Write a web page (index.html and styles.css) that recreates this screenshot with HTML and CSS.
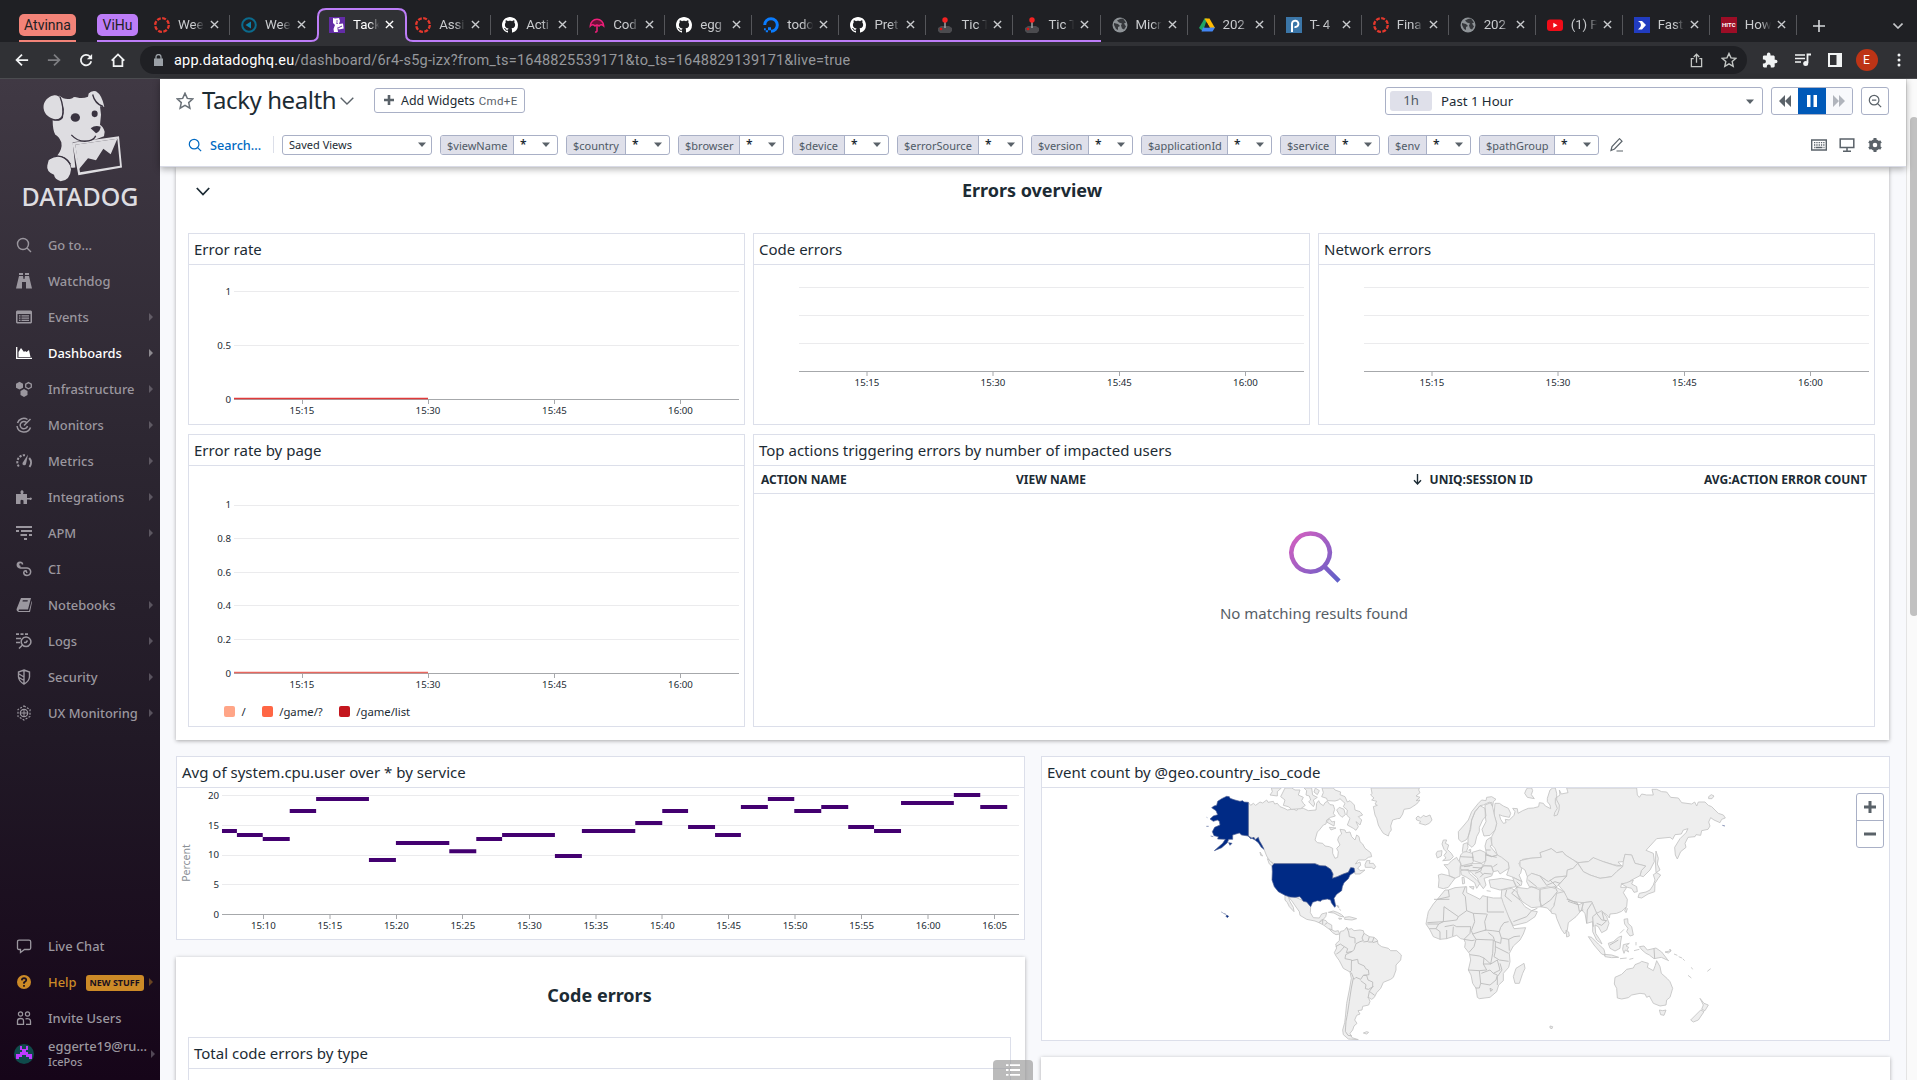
FILE: index.html
```html
<!DOCTYPE html>
<html lang="en">
<head>
<meta charset="utf-8">
<title>Tacky health | Datadog</title>
<link rel="stylesheet" href="styles.css">
</head>
<body>
<svg class="defs" width="0" height="0" aria-hidden="true">
  <defs>
    <symbol id="canvas" viewBox="0 0 16 16"><circle cx="8" cy="8" r="6.8" fill="none" stroke="#e4382d" stroke-width="2.3" stroke-dasharray="3.9 1.44"/></symbol>
    <symbol id="github" viewBox="0 0 16 16"><path fill="#fff" d="M8 0C3.58 0 0 3.58 0 8c0 3.54 2.29 6.53 5.47 7.59.4.07.55-.17.55-.38 0-.19-.01-.82-.01-1.49-2.01.37-2.53-.49-2.69-.94-.09-.23-.48-.94-.82-1.13-.28-.15-.68-.52-.01-.53.63-.01 1.08.58 1.23.82.72 1.21 1.87.87 2.33.66.07-.52.28-.87.51-1.07-1.78-.2-3.64-.89-3.64-3.95 0-.87.31-1.59.82-2.15-.08-.2-.36-1.02.08-2.12 0 0 .67-.21 2.2.82.64-.18 1.32-.27 2-.27s1.36.09 2 .27c1.53-1.04 2.2-.82 2.2-.82.44 1.1.16 1.92.08 2.12.51.56.82 1.27.82 2.15 0 3.07-1.87 3.75-3.65 3.95.29.25.54.73.54 1.48 0 1.07-.01 1.93-.01 2.2 0 .21.15.46.55.38A8 8 0 0 0 16 8c0-4.42-3.58-8-8-8z"/></symbol>
    <symbol id="globe" viewBox="0 0 16 16"><circle cx="8" cy="8" r="7.5" fill="#8e9397"/><path fill="#1f2024" d="M2 6l4 1 2 2-2 1 0 3-2-1-2-4zM8 2l3-.5 3 4-2 1 2 3-2 3-2-1-1-3 1-2-3-1-2-2z" opacity=".8"/></symbol>
    <symbol id="joystick" viewBox="0 0 16 16"><path fill="#4b4b4f" d="M1 11l3-2h8l3 2v3l-2 2H3l-2-2z"/><path fill="#aaa" d="M7.3 5h1.4v6H7.3z"/><circle cx="8" cy="3" r="2.7" fill="#f42222"/><circle cx="4" cy="12" r="1.3" fill="#d11"/></symbol>
    <symbol id="close" viewBox="0 0 10 10"><path d="M1 1l8 8M9 1L1 9" stroke="currentColor" stroke-width="1.5" fill="none"/></symbol>
    <symbol id="down" viewBox="0 0 10 6"><path d="M0 .5h10L5 6z" fill="currentColor"/></symbol>
    <symbol id="mag" viewBox="0 0 16 16"><path d="M7 1.5a5.5 5.5 0 1 0 0 11 5.5 5.5 0 0 0 0-11zM11 11l4 4" stroke="currentColor" fill="none" stroke-width="1.4"/></symbol>
  </defs>
</svg>

<header class="browser">
  <div class="tabs">
    <span class="chip chip-red">Atvinna</span>
    <span class="chip chip-purple">ViHu</span>
    <div class="tablist">
      <div class="tab g"><svg class="fav"><use href="#canvas"/></svg><span>Wee</span><svg class="x"><use href="#close"/></svg></div>
      <div class="tab g"><svg class="fav" viewBox="0 0 16 16"><circle cx="8" cy="8" r="6.8" fill="none" stroke="#0b6a8c" stroke-width="2"/><path d="M10 4.5v7L4.5 8z" fill="#0b82ab"/></svg><span>Wee</span><svg class="x"><use href="#close"/></svg></div>
      <div class="tab active"><svg class="outline" viewBox="0 0 104 34"><path d="M0 34V33H1Q8 33 8 26V9Q8 1 16 1H88Q96 1 96 9V26Q96 33 103 33H104V34z" fill="#303135"/><path d="M0 33H1Q8 33 8 26V9Q8 1 16 1H88Q96 1 96 9V26Q96 33 103 33H104" fill="none" stroke="#bd7df8" stroke-width="2"/></svg><svg class="fav" viewBox="0 0 16 16"><path d="M0 0h16v16H0z" fill="#632ca6"/><path d="M4 1l2 .6L10 1l1 3-1 3 4-.6.7 5-5 1.200-1.500-3L9 15H5l-.5-3L6 8 4 6z" fill="#fff"/><circle cx="8" cy="4" r=".7" fill="#632ca6"/><path d="M7 6l2 .3M9 11l4-2" stroke="#632ca6"/></svg><span>Tack</span><svg class="x"><use href="#close"/></svg></div>
      <div class="tab g"><svg class="fav"><use href="#canvas"/></svg><span>Assi</span><svg class="x"><use href="#close"/></svg></div>
      <div class="tab g"><svg class="fav"><use href="#github"/></svg><span>Acti</span><svg class="x"><use href="#close"/></svg></div>
      <div class="tab g"><svg class="fav" viewBox="0 0 16 16"><path d="M1.300 9A6.700 6.700 0 0 1 14.700 9Q12 6.500 10 9 8 7 6 9 3.500 6.500 1.300 9z" fill="#6b1038" stroke="#f01f7a" stroke-width="1.500"/><path d="M8 8v6q-.2 1.300-2 1" fill="none" stroke="#f01f7a" stroke-width="1.500"/></svg><span>Cod</span><svg class="x"><use href="#close"/></svg></div>
      <div class="tab g"><svg class="fav"><use href="#github"/></svg><span>egg</span><svg class="x"><use href="#close"/></svg></div>
      <div class="tab g"><svg class="fav" viewBox="0 0 16 16"><path d="M8 14.300A6.300 6.300 0 1 0 1.700 8" fill="none" stroke="#0a7cff" stroke-width="3"/><path d="M5 10.300h3v3H5zM2.800 13.200H5v2H2.800zM1 11.300h1.800v1.900H1z" fill="#0a7cff"/></svg><span>todo</span><svg class="x"><use href="#close"/></svg></div>
      <div class="tab g"><svg class="fav"><use href="#github"/></svg><span>Pret</span><svg class="x"><use href="#close"/></svg></div>
      <div class="tab g"><svg class="fav"><use href="#joystick"/></svg><span>Tic T</span><svg class="x"><use href="#close"/></svg></div>
      <div class="tab g"><svg class="fav"><use href="#joystick"/></svg><span>Tic T</span><svg class="x"><use href="#close"/></svg></div>
      <div class="tab"><svg class="fav"><use href="#globe"/></svg><span>Micr</span><svg class="x"><use href="#close"/></svg></div>
      <div class="tab"><svg class="fav" viewBox="0 0 16 16"><path fill="#1fa463" d="M5.500 1.500h2.600L4 14.500 0 11z"/><path fill="#ffba00" d="M5.500 1.500h5L16 11h-5z"/><path fill="#4285f4" d="M4 10.500h12l-2.500 4h-11z"/><path d="M8 6l2.600 4.500H5.400z" fill="#1f2024"/></svg><span>202</span><svg class="x"><use href="#close"/></svg></div>
      <div class="tab"><svg class="fav" viewBox="0 0 16 16"><path d="M0 0h16v16H0z" fill="#3b76a8"/><path d="M6 15V6.500a3.200 3.200 0 1 1 2.500 3.500" fill="none" stroke="#fff" stroke-width="2"/></svg><span>T- 4</span><svg class="x"><use href="#close"/></svg></div>
      <div class="tab"><svg class="fav"><use href="#canvas"/></svg><span>Fina</span><svg class="x"><use href="#close"/></svg></div>
      <div class="tab"><svg class="fav"><use href="#globe"/></svg><span>202</span><svg class="x"><use href="#close"/></svg></div>
      <div class="tab"><svg class="fav" viewBox="0 0 16 16"><rect y="2.500" width="16" height="11.500" rx="3" fill="#f00c18"/><path d="M6.300 5.800v5l4.200-2.500z" fill="#fff"/></svg><span>(1) P</span><svg class="x"><use href="#close"/></svg></div>
      <div class="tab"><svg class="fav" viewBox="0 0 16 16"><path d="M0 0h16v16H0z" fill="#213cc0"/><path d="M4 4h4l4 4-4 4.500H4q3-2 3-4.500T4 4z" fill="#fff"/></svg><span>Fast</span><svg class="x"><use href="#close"/></svg></div>
      <div class="tab"><span class="hitc">HITC</span><span>How</span><svg class="x"><use href="#close"/></svg></div>
    </div>
    <svg class="plus" viewBox="0 0 12 12"><path d="M6 0v12M0 6h12" stroke="#d5d7da" stroke-width="1.600"/></svg>
    <svg class="tabdown" viewBox="0 0 10 6"><path d="M.5.5L5 5 9.500.5" fill="none" stroke="#c5c7ca" stroke-width="1.600"/></svg>
  </div>
  <div class="toolbar">
    <svg class="nav" viewBox="0 0 16 16"><path d="M15 8H2M8 1.800L1.800 8 8 14.200" fill="none" stroke="#f1f3f4" stroke-width="2"/></svg>
    <svg class="nav" viewBox="0 0 16 16"><path d="M1 8h13M8 1.800L14.200 8 8 14.200" fill="none" stroke="#7d7e82" stroke-width="2"/></svg>
    <svg class="nav" viewBox="0 0 16 16"><path d="M14 9.500A6 6 0 1 1 12.500 4L14 5.500" fill="none" stroke="#f1f3f4" stroke-width="2"/><path d="M15 1v6H9z" fill="#f1f3f4"/></svg>
    <svg class="nav" viewBox="0 0 16 16"><path d="M.8 8.800L8 1.600l7.200 7.200M3 7.500v7.500h10V7.500" fill="none" stroke="#f1f3f4" stroke-width="2"/></svg>
    <div class="omnibox">
      <svg class="lock" viewBox="0 0 9 12"><path d="M0 4.500h9V12H0z" fill="#9aa0a6"/><path d="M2 5V3a2.500 2.500 0 0 1 5 0v2" fill="none" stroke="#9aa0a6" stroke-width="1.300"/></svg>
      <span class="url"><b>app.datadoghq.eu</b>/dashboard/6r4-s5g-izx?from_ts=1648825539171&amp;to_ts=1648829139171&amp;live=true</span>
      <svg class="share" viewBox="0 0 14 16"><path d="M4 6H1.500v8.500h11V6H10M7 10.500V1.500M4 4.300l3-3 3 3" fill="none" stroke="#c4c7c5" stroke-width="1.400"/></svg>
      <svg class="bm" viewBox="0 0 16 16"><path d="M8 1.500l2 4.400 4.700.5-3.500 3.200 1 4.700L8 11.900l-4.200 2.400 1-4.700L1.300 6.400 6 5.900z" fill="none" stroke="#c4c7c5" stroke-width="1.400"/></svg>
    </div>
    <svg class="tb" viewBox="0 0 16 16"><path fill="#f1f3f4" d="M13.700 7.700h-1V4.800c0-.8-.6-1.400-1.400-1.400H8.500v-1a1.800 1.800 0 0 0-3.600 0v1H2.200C1.400 3.400.9 4 .9 4.800v2.600h1a2 2 0 0 1 0 4h-1V14c0 .8.5 1.400 1.300 1.400h2.600v-1a2 2 0 0 1 4 0v1h2.500c.8 0 1.400-.6 1.400-1.400v-2.700h1a1.800 1.800 0 0 0 0-3.600z"/></svg>
    <svg class="tb" viewBox="0 0 16 16"><path d="M0 3h10M0 6.500h10M0 10h6" stroke="#f1f3f4" stroke-width="1.700"/><path d="M16 2.500h-3.500V11" stroke="#f1f3f4" stroke-width="1.800" fill="none"/><circle cx="10.700" cy="11.500" r="2.500" fill="#f1f3f4"/></svg>
    <svg class="tb" viewBox="0 0 16 16"><path d="M2 2h12v12H2z" fill="none" stroke="#f1f3f4" stroke-width="2"/><path d="M9.500 2H15v12H9.500z" fill="#f1f3f4"/></svg>
    <span class="user">E</span>
    <svg class="tb dots" viewBox="0 0 16 16"><g fill="#f1f3f4"><circle cx="8" cy="3" r="1.500"/><circle cx="8" cy="8" r="1.500"/><circle cx="8" cy="13" r="1.500"/></g></svg>
  </div>
</header>

<div class="app">
  <nav class="side">
    <div class="logo">
      <svg viewBox="129 30 237 275" width="79" height="92"><g fill="#dedde1">
        <path d="M131 86C128 66 142 50 160 46 178 42 188 60 188 72L190 95C186 112 178 118 166 118 148 114 134 104 131 86z"/>
        <path d="M178 46Q195 62 217 54 222 48 232 52 248 56 264 50L266 40Q274 30 288 33 306 44 313 80L300 78 303 104 300 134Q310 140 314 155L312 168 286 178 218 186 226 262Q210 264 213 258 210 236 186 229L172 226Q188 206 184 186 176 168 166 164 158 150 158 120L178 120Q192 112 192 88z"/>
        <path d="M146 240Q160 226 184 228 210 242 213 268 210 302 182 303 164 298 162 284 138 274 142 256z"/>
        <path fill-rule="evenodd" d="M217 188L357 168 366 262 235 285zM226 194L240 276 360 257 352 176z"/>
        <path d="M226 194L352 176 332 222 310 206 288 240 264 234 236 268z"/></g>
        <g fill="#393340"><ellipse cx="226" cy="112" rx="14" ry="13"/><ellipse cx="284" cy="101" rx="9" ry="10"/><path d="M272 144Q286 134 302 140 300 156 288 159z"/></g>
        <path d="M278 43Q284 70 309 79M180 50Q193 82 187 112 180 122 160 119M214 164Q236 188 266 182 282 180 287 167M147 236Q186 214 211 252" fill="none" stroke="#393340" stroke-width="4"/></svg>
      <strong>DATADOG</strong>
    </div>
    <ul class="menu">
      <li><svg viewBox="0 0 16 16"><use href="#mag"/></svg>Go to...</li>
      <li><svg viewBox="0 0 16 16"><path fill="currentColor" d="M3 0h4v2H3zM9 0h4v2H9zM3 3h4l.5 3h1L9 3h4l3 12.500h-6V9H6v6.500H0z"/></svg>Watchdog</li>
      <li class="more"><svg viewBox="0 0 16 16"><path fill="currentColor" fill-rule="evenodd" d="M1 1.500h14l1 1v11l-1 1H1l-1-1v-11zM1.500 5v8h13V5zM3 6.300h1.500v1.200H3zm2.500 0H13v1.200H5.500zM3 8.500h1.500v1.200H3zm2.500 0H13v1.200H5.500zM3 10.700h1.500v1.200H3zm2.500 0H13v1.200H5.500z"/></svg>Events</li>
      <li class="more on"><svg viewBox="0 0 16 16"><path d="M.7 2v11.400H16" fill="none" stroke="currentColor" stroke-width="1.300"/><path fill="currentColor" d="M2.500 12V7L5 3l3 4 1-1 1.500 1L13 5l1.500 7z"/></svg>Dashboards</li>
      <li class="more"><svg viewBox="0 0 16 16"><path fill="currentColor" d="M3.500.8L7 2.700v4L3.500 8.600 0 6.700v-4zM8 8l3.500 2v4L8 16l-3.500-2v-4z"/><path fill="none" stroke="currentColor" stroke-width="1.300" d="M12.500 1.600l2.800 1.600v3L12.500 7.800 9.700 6.200v-3z"/></svg>Infrastructure</li>
      <li class="more"><svg viewBox="0 0 16 16"><path d="M11.500 2.500A6.500 6.500 0 0 0 1.500 6M1 9a7 7 0 0 0 13.500 1.500M10.500 5.500A3.700 3.700 0 1 0 11.500 9M8 8.500L14.500 2" fill="none" stroke="currentColor" stroke-width="1.500"/></svg>Monitors</li>
      <li class="more"><svg viewBox="0 0 16 16"><path d="M9 2.200A7 7 0 0 0 2.800 13.500" fill="none" stroke="currentColor" stroke-width="2" stroke-dasharray="2.200 1.300"/><path d="M13.200 5A7 7 0 0 1 13.500 14" fill="none" stroke="currentColor" stroke-width="2"/><path fill="currentColor" d="M12 1.500L10 11a1.800 1.800 0 0 1-3.500-1z"/></svg>Metrics</li>
      <li class="more"><svg viewBox="0 0 16 16"><path fill="currentColor" d="M0 5h5q-1.500-3 1-4 2.500 1 1 4h4v4h2.500q1.500-1 2.500.5-1 2.500-2.500 1H11V15H7.500v-3.500q-2-1.500-3 0V15H0z"/></svg>Integrations</li>
      <li class="more"><svg viewBox="0 0 16 16"><path fill="currentColor" d="M0 1h16v2H0zM0 5h3v2H0zM5 5h11v2H5zM4.500 9H11v2H4.500zM13 9h3v2h-3zM8 13h3v2H8z"/></svg>APM</li>
      <li><svg viewBox="0 0 16 16"><path d="M4.500 5.500A2 2 0 1 1 6.500 3.500Q6.500 1.300 4 1.300 1.300 1.500 1.300 4 1.500 6.500 4.500 7H11q3.500.5 3.700 3.800Q14.500 14.300 11 14.500 7.700 14.300 7.700 11.500 8 9.500 10 9.700L11 12" fill="none" stroke="currentColor" stroke-width="1.500"/></svg>CI</li>
      <li class="more"><svg viewBox="0 0 16 16"><path fill="currentColor" d="M5 1h10l-3 11.500H3Q2 14 3.500 14H13l2.500-9.500.7-.5L14 15H2.500Q-.2 14 .8 11.500zM6.500 4.500h5l.3-1.200h-5z"/></svg>Notebooks</li>
      <li class="more"><svg viewBox="0 0 16 16"><path d="M0 1.200h3M4.500 1.200h3M9 1.200h3M0 5.500h5M0 9.500h4" stroke="currentColor" stroke-width="1.700"/><path d="M10 4a4.800 4.800 0 1 0 .1 0zM6.500 12L3 15.500M8 9.500h2l1.500-2" fill="none" stroke="currentColor" stroke-width="1.500"/></svg>Logs</li>
      <li class="more"><svg viewBox="0 0 16 16"><path d="M8 1l5.500 2v5Q13 12.500 8 15 3 12.500 2.500 8V3zM8 1v14M3 5l5 3M3 8.500l5 3" fill="none" stroke="currentColor" stroke-width="1.400"/></svg>Security</li>
      <li class="more"><svg viewBox="0 0 16 16"><path d="M8 1l6 3.500v7L8 15l-6-3.500v-7z" fill="none" stroke="currentColor" stroke-width="1.200" stroke-dasharray="2 1.400"/><circle cx="8" cy="8" r="3.700" fill="none" stroke="currentColor" stroke-width="1.200"/><path d="M4 8h8M8 4v8" stroke="currentColor"/></svg>UX Monitoring</li>
    </ul>
    <ul class="menu low">
      <li><svg viewBox="0 0 16 16"><path d="M3 2.200h10q1.700 0 1.700 1.500V10q0 1.500-1.500 1.500H8.500L4.500 14.500v-3H3Q1.500 11.500 1.500 10V3.700Q1.500 2.200 3 2.200z" fill="none" stroke="currentColor" stroke-width="1.300"/></svg>Live Chat</li>
      <li class="more help"><svg viewBox="0 0 16 16"><circle cx="8" cy="8" r="7" fill="currentColor"/><path d="M5.800 6.300Q6 4.200 8 4.200q2.300.1 2.300 2Q10.200 7.300 8 8.500v1.200M8 11v1.700" fill="none" stroke="#191020" stroke-width="1.700"/></svg>Help<em>NEW STUFF</em></li>
      <li><svg viewBox="0 0 16 16"><circle cx="4.500" cy="4" r="2.100" fill="none" stroke="currentColor" stroke-width="1.200"/><circle cx="11.500" cy="4" r="2.100" fill="none" stroke="currentColor" stroke-width="1.200"/><path d="M1.500 14.300V11Q1.500 8.500 4.500 8.500T7.500 11v3.300zM9.500 8.800q5-.8 5 2.500v3H10" fill="none" stroke="currentColor" stroke-width="1.300"/></svg>Invite Users</li>
    </ul>
    <div class="account">
      <svg viewBox="0 0 20 20" width="20" height="20"><circle cx="10" cy="10" r="10" fill="#0f4b4b"/><path d="M6 2h2v3h4V2h2v4h-2v2h2v2h4v5h-3v-2h-3v-2H8v2H5v2H2v-5h4V8h2V6H6z" fill="#bd3cff"/></svg>
      <p>eggerte19@ru...<small>IcePos</small></p>
    </div>
  </nav>

  <main class="main">
    <header class="head">
      <div class="row1">
        <svg class="fave" viewBox="0 0 18 18"><path d="M9 1.200l2.300 5.200 5.500.5-4.100 3.700 1.200 5.600L9 13.300l-4.900 2.900 1.200-5.600L1.200 6.900l5.500-.5z" fill="none" stroke="#6a7178" stroke-width="1.500"/></svg>
        <h1>Tacky health</h1>
        <svg class="chev" viewBox="0 0 14 8"><path d="M.7.800L7 7 13.300.800" fill="none" stroke="#5a6269" stroke-width="1.400"/></svg>
        <button class="add"><svg viewBox="0 0 10 10"><path d="M5 0v10M0 5h10" stroke="#5a6269" stroke-width="2.600"/></svg>Add Widgets<kbd>Cmd+E</kbd></button>
        <div class="time"><b>1h</b><span>Past 1 Hour</span><svg class="dd"><use href="#down"/></svg></div>
        <div class="play">
          <span><svg viewBox="0 0 12 12"><path d="M6 0v12L0 6zM12 0v12L6 6z" fill="#5a6269"/></svg></span>
          <span class="pause"><svg viewBox="0 0 12 12"><path d="M1 0h3.500v12H1zM7.500 0H11v12H7.500z" fill="#fff"/></svg></span>
          <span class="off"><svg viewBox="0 0 12 12"><path d="M0 0l6 6-6 6zM6 0l6 6-6 6z" fill="#b0b4bc"/></svg></span>
        </div>
        <div class="zoomout"><svg viewBox="0 0 16 16"><use href="#mag"/><path d="M4.500 7h5" stroke="#5a6269" stroke-width="1.400"/></svg></div>
      </div>
      <div class="row2">
        <div class="search"><svg viewBox="0 0 16 16"><use href="#mag"/></svg>Search...</div>
        <div class="saved">Saved Views<svg class="dd"><use href="#down"/></svg></div>
        <div class="var v1"><b>$viewName</b><i>*</i><svg class="dd"><use href="#down"/></svg></div>
        <div class="var v2"><b>$country</b><i>*</i><svg class="dd"><use href="#down"/></svg></div>
        <div class="var v3"><b>$browser</b><i>*</i><svg class="dd"><use href="#down"/></svg></div>
        <div class="var v4"><b>$device</b><i>*</i><svg class="dd"><use href="#down"/></svg></div>
        <div class="var v5"><b>$errorSource</b><i>*</i><svg class="dd"><use href="#down"/></svg></div>
        <div class="var v6"><b>$version</b><i>*</i><svg class="dd"><use href="#down"/></svg></div>
        <div class="var v7"><b>$applicationId</b><i>*</i><svg class="dd"><use href="#down"/></svg></div>
        <div class="var v8"><b>$service</b><i>*</i><svg class="dd"><use href="#down"/></svg></div>
        <div class="var v9"><b>$env</b><i>*</i><svg class="dd"><use href="#down"/></svg></div>
        <div class="var v10"><b>$pathGroup</b><i>*</i><svg class="dd"><use href="#down"/></svg></div>
        <svg class="pencil" viewBox="0 0 14 14"><path d="M1 12.500l1-4 7.500-7.800 2.500 2.500-7.500 7.800zM6.500 13h6.500" fill="none" stroke="#5a6269" stroke-width="1.200"/></svg>
        <div class="tools">
          <svg viewBox="0 0 16 16"><path d="M.7 3h14.600v10H.7z" fill="none" stroke="#5a6269" stroke-width="1.400"/><path d="M3 5.700h10.500M3 8h10.500" stroke="#5a6269" stroke-width="1.300" stroke-dasharray="1.300 1"/><path d="M4.500 10.500h7M3 10.500h.8M12.500 10.500h1" stroke="#5a6269" stroke-width="1.300"/></svg>
          <svg viewBox="0 0 16 16"><path d="M1.200 2h13.600v8.500H1.200zM8 10.500V14M4 14.200h8" fill="none" stroke="#5a6269" stroke-width="1.500"/></svg>
          <svg viewBox="0 0 16 16"><circle cx="8" cy="8" r="4" fill="none" stroke="#5a6269" stroke-width="3.400"/><path d="M8 1v2.500M8 12.500V15M2 4.500l2.200 1.300M11.800 10.200L14 11.500M2 11.500l2.200-1.300M11.800 5.800L14 4.500" stroke="#5a6269" stroke-width="3"/></svg>
        </div>
      </div>
    </header>

    <div class="board">
      <section class="group overview">
        <div class="ghead"><svg viewBox="0 0 14 9"><path d="M.8 1L7 7.500 13.200 1" fill="none" stroke="#1c2b34" stroke-width="1.800"/></svg><h2>Errors overview</h2></div>
        <div class="grid">
          <article class="widget"><h3>Error rate</h3>
            <svg class="chart" viewBox="189 265 555 159"><path class="gl" d="M234 291.500H739M234 345.500H739"/><path class="ax" d="M234 399.500H739M302.500 399v5M428.500 399v5M554.500 399v5M680.500 399v5"/><path d="M234 398.500H428" stroke="#e03a3a" stroke-width="1.400"/>
              <g class="yl"><text x="231" y="295">1</text><text x="231" y="349">0.5</text><text x="231" y="403">0</text></g><g class="xl"><text x="302" y="414">15:15</text><text x="428" y="414">15:30</text><text x="554.500" y="414">15:45</text><text x="680.500" y="414">16:00</text></g></svg></article>
          <article class="widget"><h3>Code errors</h3>
            <svg class="chart" viewBox="754 265 555 159"><path class="gl" d="M799 287.500H1304M799 315.500H1304M799 343.500H1304"/><path class="ax" d="M799 371.500H1304M867 371v5M993 371v5M1119.500 371v5M1245.500 371v5"/><g class="xl"><text x="867" y="386">15:15</text><text x="993" y="386">15:30</text><text x="1119.500" y="386">15:45</text><text x="1245.500" y="386">16:00</text></g></svg></article>
          <article class="widget"><h3>Network errors</h3>
            <svg class="chart" viewBox="754 265 555 159"><path class="gl" d="M799 287.500H1304M799 315.500H1304M799 343.500H1304"/><path class="ax" d="M799 371.500H1304M867 371v5M993 371v5M1119.500 371v5M1245.500 371v5"/><g class="xl"><text x="867" y="386">15:15</text><text x="993" y="386">15:30</text><text x="1119.500" y="386">15:45</text><text x="1245.500" y="386">16:00</text></g></svg></article>
          <article class="widget"><h3>Error rate by page</h3>
            <svg class="chart" viewBox="189 466 555 229"><path class="gl" d="M234 505.500H739M234 538.500H739M234 572.500H739M234 605.500H739M234 639.500H739"/><path class="ax" d="M234 673.500H739M302.500 673v5M428.500 673v5M554.500 673v5M680.500 673v5"/><path d="M234 672.500H428" stroke="#e8675f" stroke-width="1.400"/>
              <g class="yl"><text x="231" y="508">1</text><text x="231" y="542">0.8</text><text x="231" y="576">0.6</text><text x="231" y="609">0.4</text><text x="231" y="643">0.2</text><text x="231" y="677">0</text></g><g class="xl"><text x="302" y="688">15:15</text><text x="428" y="688">15:30</text><text x="554.500" y="688">15:45</text><text x="680.500" y="688">16:00</text></g></svg>
            <p class="legend"><span class="l1">/</span><span class="l2">/game/?</span><span class="l3">/game/list</span></p></article>
          <article class="widget wide"><h3>Top actions triggering errors by number of impacted users</h3>
            <div class="thead"><span>ACTION NAME</span><span>VIEW NAME</span><span class="num"><svg viewBox="0 0 9 11"><path d="M4.500 0v10M1 6.300L4.500 10 8 6.300" fill="none" stroke="#1c2b34" stroke-width="1.400"/></svg>UNIQ:SESSION ID</span><span class="num">AVG:ACTION ERROR COUNT</span></div>
            <div class="empty"><svg viewBox="0 0 54 54"><defs><linearGradient id="mg" x1="0" y1="0" x2="1" y2="1"><stop offset="0" stop-color="#d65fc0"/><stop offset="1" stop-color="#5f5fc8"/></linearGradient></defs><path d="M23 3.500a19.500 19.500 0 1 0 .01 0zM37 37L52 52" fill="none" stroke="url(#mg)" stroke-width="4.600"/></svg><p>No matching results found</p></div></article>
        </div>
      </section>

      <div class="cols">
        <div class="col">
          <article class="widget cpu"><h3>Avg of system.cpu.user over * by service</h3>
            <svg class="chart" viewBox="177 788 847 150"><path class="gl" d="M222 795.500H1019M222 825.500H1019M222 855.500H1019M222 884.500H1019"/>
              <path class="ax" d="M222 914.500H1019M263.500 914v5M330 914v5M396.500 914v5M462.500 914v5M529.500 914v5M596 914v5M662 914v5M728.500 914v5M795 914v5M861.500 914v5M928 914v5M994.500 914v5"/>
              <g transform="translate(160 740) scale(.574 .33333)"><path stroke="#430070" stroke-width="12" d="M108 273H134M134 285H179M179 297H226M226 213H272M272 177H364M364 360H411M411 309H504M504 334H551M551 297H596M596 285H688M688 348H735M735 273H828M828 249H875M875 213H920M920 261H967M967 285H1012M1012 201H1059M1059 177H1105M1105 213H1152M1152 201H1199M1199 261H1244M1244 273H1291M1291 189H1383M1383 165H1429M1429 201H1476"/></g>
              <g class="yl"><text x="219" y="799">20</text><text x="219" y="829">15</text><text x="219" y="858">10</text><text x="219" y="888">5</text><text x="219" y="918">0</text></g>
              <g class="xl"><text x="263.300" y="929">15:10</text><text x="329.800" y="929">15:15</text><text x="396.300" y="929">15:20</text><text x="462.800" y="929">15:25</text><text x="529.300" y="929">15:30</text><text x="595.800" y="929">15:35</text><text x="662.300" y="929">15:40</text><text x="728.700" y="929">15:45</text><text x="795.200" y="929">15:50</text><text x="861.700" y="929">15:55</text><text x="928.200" y="929">16:00</text><text x="994.700" y="929">16:05</text><text class="pct" transform="translate(190 863) rotate(-90)">Percent</text></g></svg></article>
          <section class="group code"><h2>Code errors</h2><article class="widget"><h3>Total code errors by type</h3></article></section>
        </div>
        <div class="col">
          <article class="widget geo"><h3>Event count by @geo.country_iso_code</h3>
            <div class="mapbox">
            <svg class="map" viewBox="6 144 2541 756">
              <g class="land">
                <path d="M625 187L632 196 640 190 647 196 660 186 668 189 680 180 684 187 700 184 704 192 712 190 720 200 735 206 742 210 760 207 770 212 775 204 790 205 805 212 828 210 830 190 836 182 840 190 850 197 855 188 862 184 870 194 880 195 884 208 880 220 886 228 872 232 860 240 858 252 850 255 838 270 832 276 825 300 832 308 848 310 855 318 868 320 878 325 878 340 885 355 893 352 895 335 890 325 900 315 893 300 896 290 905 282 900 268 915 270 918 278 930 276 935 290 945 300 950 285 957 290 960 305 968 312 975 325 992 338 995 350 985 352 975 360 955 360 946 372 960 366 962 376 953 384 960 392 975 390 960 402 945 402 943 386 932 383 925 397 910 402 892 410 877 415 879 402 872 388 857 378 840 377 825 371 702 371 690 364 680 348 672 328 665 314 655 300 640 294 625 288z"/>
                <path d="M694 144L697 155 690 165 712 168 712 155 724 144zM735 144L722 170 735 180 730 196 745 200 755 208 782 206 796 196 790 190 785 182 790 172 775 165 780 150 765 150 755 144zM792 144L800 152 798 165 808 168 812 180 806 185 820 200 824 192 820 180 832 172 818 165 815 144zM826 144l12 8-6 12-10-8zM846 144L850 158 845 170 860 175 862 182 885 183 895 180 900 176 915 190 910 200 922 210 920 225 930 235 922 255 940 265 948 271 955 260 948 245 960 255 965 240 955 230 968 225 960 215 945 210 943 195 930 182 922 186 915 170 900 164 902 156 885 150 880 144zM860 246l8-10 8 10 8-2-2 14zM868 262l20 2-15 6zM890 210l8-8 14 6 4 16-10 8-8-8z"/>
                <path d="M976 382L975 374 980 362 990 362 988 370 1000 370 1007 380 1002 387 995 382zM682 356L690 362 703 376 700 381 688 372zM660 336l8 12-6-2z"/>
                <path d="M993 144L996 160 992 165 1002 174 995 180 1010 184 1005 192 1012 196 1000 200 1005 225 1010 235 1015 255 1022 268 1030 280 1045 288 1048 278 1054 270 1052 258 1058 240 1072 236 1080 235 1088 222 1092 208 1110 205 1130 192 1140 180 1128 182 1140 172 1128 168 1140 158 1136 150 1138 144zM1128 234L1134 228 1142 234 1150 226 1158 230 1170 225 1176 240 1168 250 1156 255 1138 250 1142 244 1130 240z"/>
                <path d="M735 466L765 471 785 480 800 483 812 500 811 518 820 533 838 534 845 522 860 518 857 530 848 540 837 548 825 543 800 538 780 526 778 515 766 498 755 482 745 470 750 485 760 502 762 515 748 500 742 488 735 480zM837 548L846 538 858 542 862 548 875 555 876 570 885 574 895 572 899 582 888 584 878 578 868 568 852 556zM865 517L880 513 892 517 905 524 912 531 898 528 882 519zM914 532l14-2 22 6-14 4-22-2zM896 534l10 2-8 2zM890 496l6 2 0 6zM898 506l4 6"/>
                <path d="M899 582L902 574 912 572 920 562 926 568 935 566 942 572 960 570 970 572 972 580 988 590 1002 592 1012 600 1014 612 1025 620 1045 625 1052 632 1070 632 1084 645 1082 660 1068 675 1068 690 1060 712 1052 718 1030 727 1022 745 1010 758 1003 772 995 778 985 772 990 784 986 795 968 799 966 810 954 812 960 822 950 826 944 840 951 850 942 858 938 870 930 880 936 893 955 899 925 897 910 884 908 870 914 848 916 832 920 790 928 750 934 715 930 696 910 685 898 662 888 648 883 638 890 624 887 612 898 602z"/>
                <path d="M970 879l10-4 6 2-6 5z"/>
              </g>
              <path class="bd" d="M920 562l6 14 2 14 17 4v16M972 580l-6 14 4 8-10 3-12 6-6 18M988 590l-4 14-14 2M1002 592l-5 14-12 0M1012 604l-14 4M887 620l14-8 12 8-14 16-10 6M913 620l10 6-4 12 18-4 5-5M937 634l-20 10-2 12 20 4-1 12v20l-4 4M935 662l18-4 2 12 18 8 4 8 8 4 2 14-17 2-8 12-14-6-6 6-8-20M970 706l10 0 4 14 14 6 0 14-12 8-10-2 2-12-16-12M1000 738l-12 16-4 20M988 754l16 12M940 714l-6 30-6 40-6 40-4 20-2 30 8 12 12 2M848 540l0 12M862 548l-8 6M876 570l-8-4"/>
              <g class="us">
                <path d="M625 187L612 186 608 182 600 184 585 180 570 175 568 170 560 169 545 176 533 184 530 196 522 198 515 203 528 212 533 224 520 228 510 237 520 244 532 240 538 244 540 255 524 262 517 275 522 287 535 290 533 297 556 298 548 310 523 332 545 323 562 308 566 298 578 298 578 285 598 279 605 285 625 288 632 296 642 292 645 300 655 292 658 302 665 314 672 328 664 322 655 308 645 300 625 289z"/>
                <path d="M702 371L825 371 840 377 857 378 872 388 879 402 877 415 892 410 910 402 925 397 932 383 942 384 944 396 930 405 925 416 912 428 907 440 905 452 890 463 882 475 887 498 884 502 874 488 872 480 862 477 845 480 842 484 832 482 818 487 812 500 800 486 790 484 780 470 765 472 750 471 735 466 715 455 703 440 696 420 697 395 696 378zM560 525l6 4-4 4-4-4zM544 516l4 2M550 520l8 3M500 232l2 1M499 259l7 0M512 288l8 2M566 308l10 2-6 6zM2047 256l8 2" />
              </g>
              <g class="land" transform="translate(1200)">
                <path d="M165 190L178 190 190 198 205 205 212 220 208 232 188 228 178 224 182 238 190 250 198 248 196 238 208 240 222 226 225 215 218 205 232 206 234 220 248 212 265 205 280 204 296 200 298 188 310 190 316 198 332 206 330 195 322 185 322 175 330 150 338 144 346 144 350 160 350 180 358 195 357 210 352 225 342 228 344 218 352 205 346 190 346 175 360 165 358 150 364 162 384 158 380 144 590 144 592 165 598 172 605 162 620 165 640 165 636 148 650 148 665 155 680 156 692 172 715 174 725 188 755 192 764 186 770 198 775 186 795 186 805 196 815 200 835 220 850 225 856 234 845 238 840 248 822 240 812 233 806 246 810 258 804 268 785 272 782 286 768 284 765 290 744 292 735 310 738 322 722 335 712 357 706 345 704 322 720 296 738 278 744 266 730 270 724 282 705 284 698 298 690 292 650 296 618 331 640 340 643 365 630 390 610 410 600 407 604 392 617 378 585 370 575 345 555 343 550 365 534 366 545 378 520 374 490 365 470 360 460 353 445 365 415 368 400 360 376 345 368 335 350 338 334 326 315 334 300 338 304 352 270 355 248 358 236 372 246 382 242 400 237 405 246 425 220 412 200 405 207 385 205 368 185 362 172 345 165 325 155 315 155 290 165 270 170 250 162 225z"/>
                <path d="M258 150L254 160 262 172 283 176 274 164 278 152 275 144 262 144zM806 170l8-6 8 4-6 8-10 0z"/>
                <path d="M55 275L70 258 85 240 95 215 115 190 125 180 138 182 140 172 155 170 168 178 160 185 158 200 150 186 140 190 130 195 120 197 105 215 95 240 92 268 84 292 78 300 65 306 56 298zM120 197L135 205 138 228 128 240 118 262 118 275 110 290 105 312 96 322 84 312 84 292 90 268 95 240 105 215zM135 195L155 187 158 200 163 225 170 250 165 270 150 286 132 288 126 268 138 245 136 228z"/>
                <path d="M10 300L20 300 16 310 26 315 22 328 34 340 40 350 30 360 8 362 18 354 12 346 20 336 12 328 6 312zM-8 334L6 332 4 348-8 354-12 342zM67 334L70 312 82 308 84 322 78 338 70 338zM86 330l6-2 0 8z"/>
                <path d="M-5 405L5 402 30 408 45 415 35 428 25 442 10 446-5 442-3 420zM12 374L24 374 35 362 50 352 54 360 62 370 60 384 60 408 45 415 28 408 26 390zM62 345L70 336 80 335 97 340 100 365 90 378 65 378 58 360zM97 337L120 330 137 338 137 362 125 370 100 362zM62 378L95 370 125 370 130 380 112 392 85 392 62 388zM62 392L85 388 88 400 108 418 120 430 110 445 104 428 80 412 64 404zM88 392L112 392 130 378 155 378 160 395 155 408 132 415 138 435 130 446 118 430 112 414 96 400zM135 318L140 300 152 292 156 315 150 318 172 345 155 350 140 345zM137 340L155 350 172 345 185 352 205 368 207 385 195 392 180 402 174 392 160 395 155 378 130 376 137 362zM66 412l6 0 2 18-6 2zM88 440l14 0-2 8zM140 452l12 2"/>
                <path d="M147 420L165 418 185 415 220 422 228 440 210 443 180 450 152 442zM218 412L246 425 244 436 230 440 222 424zM240 362L270 355 304 352 300 338 334 326 350 338 368 335 376 345 400 360 413 370 400 385 382 390 380 408 345 412 325 425 300 408 275 400 272 412 262 410 255 390 240 380zM413 368L445 365 460 353 490 365 530 378 550 378 530 395 515 410 480 415 450 405 430 395z"/>
                <path d="M413 370L430 395 450 405 480 415 515 410 530 395 548 380 550 365 555 343 575 345 585 370 617 378 604 392 600 407 575 420 560 432 545 430 542 442 560 442 550 458 562 478 560 500 545 514 530 520 510 522 508 534 500 524 485 515 470 520 455 485 430 488 400 485 380 475 372 455 355 435 380 408 382 390 400 385zM262 410L275 400 300 408 325 425 345 412 380 408 360 430 345 445 325 440 300 445 268 440 260 425zM230 442L262 446 275 440 300 450 298 480 306 500 275 503 262 495 246 484 232 460zM300 448L345 440 372 455 360 475 342 490 345 508 332 515 322 504 302 500z"/>
                <path d="M350 460L372 455 384 478 400 485 415 495 430 488 425 510 408 530 385 548 382 570 374 582 364 568 350 535 347 522 335 520 332 510 342 498zM378 570l8 6 2 12-8 3zM185 450L215 445 230 455 240 480 255 500 275 512 292 515 285 530 260 547 220 557 205 530 190 500 183 480zM430 488L455 485 470 520 485 512 500 530 507 550 500 570 485 578 475 560 465 555 467 580 480 600 486 612 470 600 458 575 458 545 440 550 435 520 425 510z"/>
                <path d="M545 432L560 428 580 420 575 432 590 440 592 455 582 457 575 445 562 442zM594 472L598 460 618 456 630 450 640 435 645 420 640 404 650 398 662 405 654 416 645 430 644 455 624 462 605 474zM648 333L655 355 652 372 660 390 648 398 646 360zM554 512l4-10 4 4-4 12zM552 538L563 536 564 550 575 560 580 585 570 588 560 575 564 565 554 552zM540 580l12-12M445 590L455 592 475 612 492 628 496 646 485 642 462 615zM492 643L515 645 536 652 515 653 495 650zM505 610L520 605 535 592 545 588 542 606 540 625 525 633 510 625zM550 614l18-4-10 8 8 4-4 6 4 8-10-6-4 10-4-12zM588 606l0 10M582 632l16-4M540 656l20-2M568 658l12-3M598 620L612 618 622 630 648 624 665 636 682 658 686 662 664 652 642 656 628 645 618 640 606 630zM675 636l18-4-4-5 4 6-8 6zM702 642l10 4M716 650l10 4M728 656l6 6M754 682l4 6M744 706l10 8M802 694l10-8M330 858l8 2-2 6-6-2z"/>
                <path d="M525 712L545 703 560 688 580 684 585 674 600 668 605 664 625 670 622 682 640 692 646 676 650 662 660 680 664 700 682 716 690 725 698 745 690 772 680 780 678 795 660 798 640 790 628 768 620 772 615 762 600 760 575 765 565 773 545 777 532 774 530 745 523 732zM658 810l10 2 10-2-6 16-10-2zM780 775L792 790 805 795 795 812 785 808 790 795zM782 810L792 815 775 840 760 846 752 840 764 828z"/>
                <path d="M252 670L255 685 248 700 238 730 225 730 220 710 228 685z"/>
                <path d="M15 450L25 450 45 443 80 440 80 458 105 470 120 478 128 467 140 470 160 474 185 474 190 490 200 515 212 545 222 566 257 563 250 582 240 600 220 618 208 640 210 665 206 682 190 700 190 722 176 735 170 755 150 772 118 776 112 772 108 745 98 730 93 705 85 690 92 660 88 640 74 622 76 608 72 598 62 596 50 586 20 596 0 598-20 590-30 570-42 552-38 530-35 515-20 492-8 478z"/>
              </g>
              <path class="bd" transform="translate(1200)" d="M-8 478L28 470 25 450M28 478L-18 478M12 500L10 545-38 548M12 500L55 530 80 512 76 470 68 460 76 440M80 512L100 520 140 522M142 470L142 516 192 516M100 520L104 545 94 572 98 582M142 522L134 545 138 570 120 575 98 582M134 570L158 572 178 575 182 562 192 548 206 545M178 575L184 594 206 598 222 590 240 588M184 594L182 610 164 604 160 590 145 578M98 582L108 598 160 600 158 640 152 672 132 654 118 648 90 644M108 598L102 620 88 636M72 598L96 602 104 600M166 604L166 634 162 650 178 660 206 664M166 620L206 640M206 598L208 632M85 690L118 692 140 690 130 672 132 654M118 692L122 730 118 744 106 744M124 700L150 690 160 700 172 705 168 720 150 735 122 730M130 672L152 672 172 660 180 690 160 700M180 670L186 690 172 710 172 735M-38 552L-4 552-12 566-32 566M-4 552L10 545 50 540 55 530M-12 566L0 575 0 598M20 570L20 596M40 560L38 588M50 560L92 560 90 580 72 598M14 560L40 555 50 560M150 745l8 4-6 5zM60 350L100 352M72 380L98 376M98 382L124 384M105 400L120 394 130 405M120 412L132 400 155 402M126 380L122 394M138 330L152 330M137 345L170 352M172 372L160 380M265 420L290 440M300 408L320 436M320 436L345 425 360 430M330 420L350 440M232 440L215 460 240 480M200 450L195 468 215 485M275 512L260 530 220 545M292 505L275 512M345 440L352 455 332 480 306 498M380 478L412 488 414 494 384 484M414 492L418 514 430 510M455 490L442 510 440 550M470 520L458 530 460 560M470 520L485 540 500 542 485 556 470 550M486 515L492 540M642 626L644 656M510 615L535 600M230 425L240 435"/>
            </svg>
            <div class="zoomer"><span><svg viewBox="0 0 12 12"><path d="M6 0v12M0 6h12" stroke="#5a6269" stroke-width="3"/></svg></span><span><svg viewBox="0 0 12 12"><path d="M0 6h12" stroke="#5a6269" stroke-width="3"/></svg></span></div>
            </div></article>
          <section class="group next"></section>
        </div>
      </div>
      <div class="peek"><svg viewBox="0 0 14 12"><path d="M0 1.200h2.500M4 1.200h10M0 6h2.500M4 6h10M0 10.800h2.500M4 10.800h10" stroke="#fff" stroke-width="1.800"/></svg></div>
    </div>
  </main>
  <div class="scroll"><i></i></div>
</div>
</body>
</html>
```

FILE: styles.css
```css
* { box-sizing: border-box; }
body { margin: 0; width: 1917px; height: 1080px; overflow: hidden; background: #f8f9fc; color: #1c2b34; font-family: "Noto Sans", "Open Sans", sans-serif; }
h1, h2, h3, p, ul { margin: 0; padding: 0; }
svg { display: block; flex: none; }
.defs { position: absolute; }

/* browser chrome */
.browser { height: 79px; background: #303135; border-bottom: 1px solid #4b4c50; font-family: Roboto, "Liberation Sans", sans-serif; }
.tabs { height: 42px; background: #1f2024; display: flex; align-items: center; padding-left: 19px; }
.chip { height: 42px; font-size: 14px; line-height: 22px; color: #202124; text-align: center; padding-top: 14px; position: relative; z-index: 0; margin-right: 21px; width: 57px; }
.chip::before { content: ""; position: absolute; z-index: -1; inset: 14px 0 6px; border-radius: 5px; background: var(--c); }
.chip::after { content: ""; position: absolute; inset: 40px 0 0; background: var(--c); }
.chip-red { --c: #f28378; }
.chip-purple { --c: #bd7df8; width: 41px; margin-right: 5px; }
.chip-purple::after { right: -6px; }
.tablist { display: flex; }
.tab { width: 87.05px; height: 42px; padding: 10px 10px 1px 11px; display: flex; align-items: center; position: relative; border-bottom: 2px solid transparent; }
.tab.g { border-bottom-color: #bd7df8; }
.tab::after { content: ""; position: absolute; right: 0; top: 15px; height: 20px; width: 1px; background: #55565a; }
.tab:nth-child(2)::after, .tab.active::after { display: none; }
.fav { width: 16px; height: 16px; }
.tab span { width: 27px; margin-left: 8px; white-space: nowrap; font-size: 13.300px; letter-spacing: -.1px; color: #c9cbce; -webkit-mask: linear-gradient(90deg, #000 60%, transparent 97%); mask: linear-gradient(90deg, #000 60%, transparent 97%); }
.tab .hitc { width: 16px; height: 16px; margin: 0; background: #9c0d26; color: #fff; font-size: 6px; font-weight: 700; line-height: 16px; text-align: center; mask: none; -webkit-mask: none; letter-spacing: 0; }
.x { width: 9px; height: 9px; color: #c9cbce; margin-left: 5px; }
.tab.active { z-index: 1; padding-left: 12px; }
.tab.active .fav, .tab.active span, .tab.active .x { position: relative; }
.tab.active .x, .tab.active span { color: #fff; }
.outline { position: absolute; left: -7px; top: 8px; width: 104px; height: 34px; }
.plus { width: 12px; height: 12px; margin: 9px 0 0 16px; }
.tabdown { width: 10px; height: 6px; margin: 9px 0 0 68px; }
.toolbar { height: 36px; display: flex; align-items: center; padding-left: 15px; }
.nav { width: 14px; height: 14px; margin-right: 18px; }
.omnibox { width: 1607px; height: 28px; border-radius: 14px; background: #1f2024; display: flex; align-items: center; padding: 0 10px 0 14px; margin-left: -3px; }
.lock { width: 9px; height: 12px; margin-right: 11px; }
.url { font-size: 14.500px; color: #96989c; letter-spacing: .21px; flex: 1; white-space: nowrap; }
.url b { color: #fff; font-weight: 400; }
.share { width: 13px; height: 15px; margin-right: 18px; }
.bm { width: 16px; height: 16px; }
.tb { width: 16px; height: 16px; margin-left: 16.500px; }
.omnibox + .tb { margin-left: 15px; }
.user { width: 22px; height: 22px; border-radius: 50%; background: #bd3416; color: #fff; font-size: 12px; line-height: 22px; text-align: center; margin-left: 12.500px; }
.dots { margin-left: 13px; }

/* app shell */
.app { display: flex; height: 1001px; }
.side { width: 160px; flex: none; background: linear-gradient(#403944, #2c2631 38%, #211926 66%, #160519); display: flex; flex-direction: column; color: #9b979f; font-size: 12.900px; font-weight: 500; }
.logo { height: 148px; padding: 11px 0 0; display: flex; flex-direction: column; align-items: center; color: #dedde1; }
.logo svg { margin-left: 5px; }
.logo strong { font-size: 25px; font-weight: 500; line-height: 28px; }
.menu { list-style: none; }
.menu li { height: 36px; padding-left: 16px; display: flex; align-items: center; position: relative; white-space: nowrap; }
.menu svg { width: 16px; height: 16px; margin-right: 16px; }
.more::after, .account::after { content: ""; position: absolute; right: 7px; top: 14px; border: 4px solid transparent; border-left-color: currentColor; border-right: 0; opacity: .45; }
.menu .on { color: #fff; }
.low { margin-top: 197px; }
.help { color: #cc8a27; }
.help em { background: #cc8a27; color: #191020; font: 700 9px/16px "Noto Sans", sans-serif; border-radius: 3px; padding: 0 4px; margin: 1px 0 0 9px; }
.account { display: flex; padding: 0 0 0 14px; position: relative; align-items: center; height: 36px; }
.account::after { right: 5px; }
.account p { margin: -2px 0 0 14px; line-height: 17px; }
.account small { display: block; font-size: 11px; line-height: 14px; }

.main { width: 1746px; display: flex; flex-direction: column; }
.head { height: 88px; background: #fff; border-bottom: 1px solid #d9dbe6; box-shadow: 0 2px 7px rgba(0,0,0,.33); position: relative; z-index: 2; flex: none; }
.row1 { display: flex; align-items: center; height: 43px; padding-left: 16px; }
.fave { width: 18px; height: 18px; }
h1 { font-size: 24px; font-weight: 400; line-height: 28px; margin: -2px 0 0 8px; white-space: nowrap; width: 135px; letter-spacing: -.42px; }
.chev { width: 14px; height: 8px; margin-left: 3px; }
.add { display: flex; align-items: center; width: 151px; height: 25px; margin: 0 0 1px 20px; padding: 0 0 0 9px; border: 1px solid #a9b0c6; border-radius: 3px; background: #fff; color: #1c2b34; font: 12.400px "Noto Sans", sans-serif; white-space: nowrap; }
.add svg { width: 10px; height: 10px; margin-right: 7px; }
.add kbd { font: 11.500px Roboto, sans-serif; color: #5a6269; margin: 2px 0 0 4px; letter-spacing: .35px; }
.time { margin-left: auto; width: 378px; height: 28px; border: 1px solid #a9b0c6; border-radius: 3px; display: flex; align-items: center; padding: 0 8px 0 4px; font-size: 13.200px; margin-top: 1px; }
.time b { width: 42px; height: 20px; border-radius: 3px; background: #dfe0ea; font-weight: 400; color: #4f5a66; text-align: center; line-height: 19px; margin-right: 9px; }
.dd { width: 8px; height: 5px; color: #5a6269; margin-left: auto; }
.play { display: flex; width: 82px; height: 28px; border: 1px solid #a9b0c6; border-radius: 3px; margin: 1px 0 0 8px; overflow: hidden; }
.play span, .zoomout { flex: 1; display: grid; place-items: center; }
.play svg { width: 12px; height: 12px; }
.play .pause { background: #0059b8; flex: 0 0 28px; margin: -1px 0; }
.play .off { background: #f8f9fc; }
.zoomout { flex: 0 0 28px; height: 28px; border: 1px solid #a9b0c6; border-radius: 3px; margin: 1px 17px 0 8px; color: #5a6269; }
.zoomout svg { width: 14px; height: 14px; }
.row2 { display: flex; align-items: center; height: 44px; padding: 1px 0 0 28px; gap: 8px; font-size: 11px; }
.search { display: flex; align-items: center; width: 86px; height: 17px; border-right: 1px solid #dcdfe9; color: #0069c2; font-size: 12.700px; font-weight: 500; }
.search svg { width: 14px; height: 14px; margin-right: 8px; }
.saved { width: 150px; height: 20px; border: 1px solid #a9b0c6; border-radius: 3px; display: flex; align-items: center; padding: 0 5px 0 6px; }
.var { height: 20px; border: 1px solid #a9b0c6; border-radius: 3px; display: flex; align-items: center; overflow: hidden; padding-right: 7px; color: #4f5a66; }
.var b { align-self: stretch; flex: 0 0 auto; background: #dfe0ea; border-right: 1px solid #a9b0c6; font-weight: 400; line-height: 19px; padding-left: 6px; width: calc(100% - 36px); }
.var i { font-style: normal; font-weight: 600; color: #1c2b34; margin-left: 6px; line-height: 14px; font-size: 12px; }
.v1 { width: 118px; } .v2 { width: 104px; } .v3 { width: 106px; } .v4 { width: 97px; } .v5 { width: 126px; } .v6 { width: 102px; } .v7 { width: 131px; } .v8 { width: 100px; } .v9 { width: 83px; } .v10 { width: 120px; }
.pencil { width: 14px; height: 14px; margin-left: 3px; }
.tools { display: flex; gap: 12px; margin: 0 23px 0 auto; }
.tools svg { width: 16px; height: 16px; }

/* dashboard */
.board { flex: 1; min-height: 0; padding: 0 17px 0 16px; overflow: hidden; position: relative; }
.group { background: #fff; box-shadow: 0 1px 4px rgba(0,0,0,.32); }
.overview { height: 573px; padding: 0 13px 0 12px; }
.ghead { height: 66px; position: relative; display: flex; justify-content: center; padding-top: 10px; }
.ghead svg { width: 14px; height: 9px; margin: 10px 0 0 8px; position: absolute; left: 0; }
h2 { font-size: 18px; line-height: 26px; font-weight: 700; text-align: center; }
.grid { display: grid; grid-template: 192px 293px / repeat(3, 557px); gap: 8.500px 8px; }
.widget { background: #fff; border: 1px solid #dcdfea; display: flex; flex-direction: column; overflow: hidden; }
.wide { grid-column: span 2; }
h3 { height: 31px; flex: none; border-bottom: 1px solid #dcdfea; padding-left: 5px; font-size: 15px; font-weight: 400; line-height: 30px; white-space: nowrap; }
.chart { width: 100%; height: auto; }
.gl { stroke: #ebebed; fill: none; }
.ax { stroke: #a6a8ab; fill: none; }
.chart text { font-size: 9.700px; fill: #1c2b34; }
.yl { text-anchor: end; }
.xl { text-anchor: middle; }
.chart .pct { fill: #8a9096; font-size: 10.500px; }
.legend { display: flex; font-size: 11.300px; line-height: 14px; padding: 10px 0 0 35px; gap: 16px; }
.legend span { display: flex; align-items: center; }
.legend span::before { content: ""; width: 11px; height: 11px; border-radius: 2px; background: var(--s); margin-right: 6.500px; }
.l1 { --s: #ffa587; } .l2 { --s: #ff6644; } .l3 { --s: #c4161e; }
.thead { display: grid; grid-template-columns: 255px 320px 197px 1fr; height: 28px; border-bottom: 1px solid #dcdfea; align-items: center; padding: 0 7px; font-size: 12px; font-weight: 700; }
.thead .num { display: flex; justify-content: flex-end; align-items: center; }
.thead svg { width: 9px; height: 11px; margin-right: 8px; }
.empty { display: flex; flex-direction: column; align-items: center; padding-top: 36px; font-size: 15px; color: #565e66; }
.empty svg { width: 53px; height: 53px; }
.empty p { margin-top: 20px; line-height: 20px; }
.cols { display: grid; grid-template-columns: 849px 849px; gap: 16px; padding-top: 16px; }
.cpu { height: 184px; }
.code { margin-top: 17px; height: 180px; padding: 25px 14px 0 12px; }
.code .widget { height: 100px; margin-top: 29px; }
.geo { height: 285px; }
.mapbox { position: relative; }
.map { width: 847px; height: 252px; }
.land path { fill: #eee; stroke: #c4c4c4; stroke-width: 2.600; stroke-linejoin: round; }
.bd { fill: none; stroke: #b9b9b9; stroke-width: 2.600; stroke-linejoin: round; }
.us path { fill: #002a85; stroke: #4d5f94; stroke-width: 2; }
.zoomer { position: absolute; right: 5px; top: 5px; width: 28px; height: 55px; border: 1px solid #a9b0c6; border-radius: 3px; background: #fff; display: grid; }
.zoomer span { display: grid; place-items: center; }
.zoomer span + span { border-top: 1px solid #a9b0c6; }
.zoomer svg { width: 12px; height: 12px; }
.next { margin-top: 16px; height: 100px; }
.peek { position: absolute; left: 833px; bottom: 0; width: 40px; height: 20px; border-radius: 4px 4px 0 0; background: rgba(150,150,150,.65); display: grid; place-items: center; }
.peek svg { width: 14px; height: 12px; }
.scroll { width: 11px; background: #fafafa; border-left: 1px solid #e4e4e4; padding: 38px 0 0 3px; overflow: hidden; }
.scroll i { display: block; width: 8px; height: 499px; border-radius: 5px; background: #c1c1c1; }
```
